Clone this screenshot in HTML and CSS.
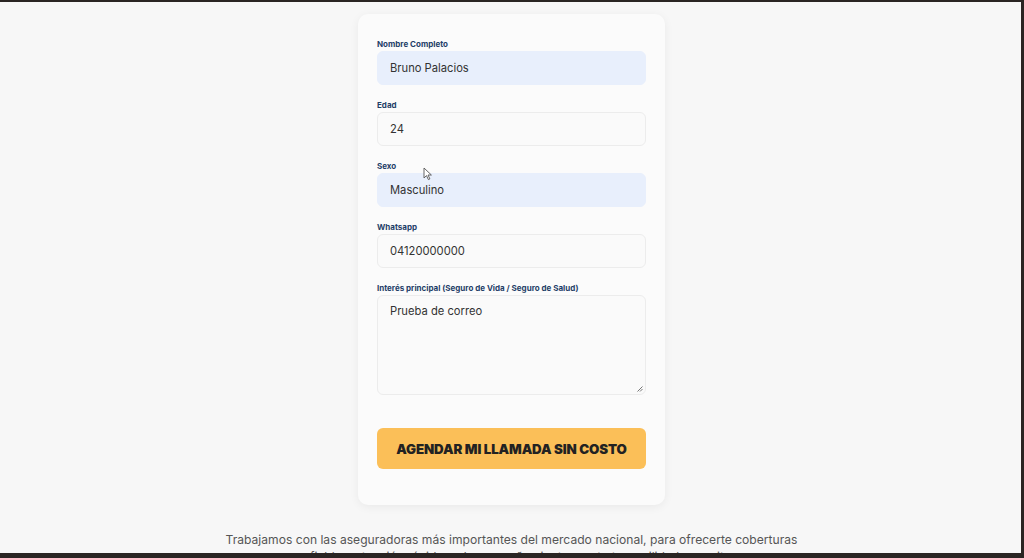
FILE: index.html
```html
<!DOCTYPE html>
<html lang="es">
<head>
<meta charset="utf-8">
<link rel="stylesheet" href="styles.css">
</head>
<body>
<div class="frame">
  <main class="page">
    <form class="card">
      <div class="field">
        <label class="label">Nombre Completo</label>
        <div class="input filled">Bruno Palacios</div>
      </div>
      <div class="field">
        <label class="label">Edad</label>
        <div class="input">24</div>
      </div>
      <div class="field">
        <label class="label">Sexo</label>
        <div class="input filled">Masculino</div>
      </div>
      <div class="field">
        <label class="label">Whatsapp</label>
        <div class="input">04120000000</div>
      </div>
      <div class="field">
        <label class="label">Interés principal (Seguro de Vida / Seguro de Salud)</label>
        <div class="input textarea">Prueba de correo
          <svg class="grip" width="6" height="6" viewBox="0 0 6 6"><path d="M5.5 0.5 L0.5 5.5 M5.5 3 L3 5.5" stroke="#777" stroke-width="1"/></svg>
        </div>
      </div>
      <button type="button" class="cta">AGENDAR MI LLAMADA SIN COSTO</button>
    </form>
    <p class="blurb">Trabajamos con las aseguradoras más importantes del mercado nacional, para ofrecerte coberturas confiables, atención rápida y el acompañamiento que tu tranquilidad necesita.</p>
  </main>
  <svg class="cursor" width="10" height="14" viewBox="0 0 10 14"><path d="M1 1 L1 11 L3.5 8.6 L5.4 12.6 L6.9 11.9 L5 8 L8.4 8 Z" fill="#fff" stroke="#555" stroke-width="0.9"/></svg>
</div>
</body>
</html>
```
FILE: styles.css
```css
* { box-sizing: border-box; }
html, body { margin: 0; padding: 0; }
body {
  width: 1024px;
  height: 558px;
  overflow: hidden;
  background: #2a2523;
  font-family: Inter, "Noto Sans", sans-serif;
}
.frame {
  position: relative;
  margin-top: 2px;
  margin-right: 3px;
  height: 551px;
  background: #f7f7f7;
  overflow: hidden;
}
.page {
  display: flex;
  flex-direction: column;
  align-items: center;
  padding-top: 12px;
  padding-left: 2px;
}
.card {
  width: 307px;
  background: #fbfbfb;
  border-radius: 10px;
  box-shadow: 0 2px 10px rgba(0,0,0,0.06);
  padding: 25px 19px 36px 19px;
  display: flex;
  flex-direction: column;
}
.field { display: flex; flex-direction: column; margin-bottom: 15px; }
.label {
  font-size: 8px;
  font-weight: 700;
  color: #1f4068;
  line-height: 10px;
  margin-bottom: 2px;
}
.input {
  height: 34px;
  border: 1px solid #ececec;
  border-radius: 6px;
  background: #fafafa;
  font-size: 11.2px;
  color: #333;
  padding: 0 12px;
  display: flex;
  align-items: center;
}
.input.filled { background: #e8effc; border-color: #e8effc; }
.textarea {
  position: relative;
  height: 100px;
  align-items: flex-start;
  padding-top: 8px;
}
.grip { position: absolute; right: 2px; bottom: 2px; }
.cta {
  margin-top: 18px;
  height: 41px;
  border: none;
  border-radius: 6px;
  background: #fbbf58;
  color: #222;
  font-family: Inter, "Noto Sans", sans-serif;
  font-weight: 900;
  font-size: 13.3px;
  letter-spacing: -0.1px;
}
.blurb {
  width: 580px;
  margin: 26px 0 0 0;
  text-align: center;
  font-size: 12.1px;
  line-height: 17px;
  color: #555;
}
.cursor { position: absolute; left: 423px; top: 165px; }
```
